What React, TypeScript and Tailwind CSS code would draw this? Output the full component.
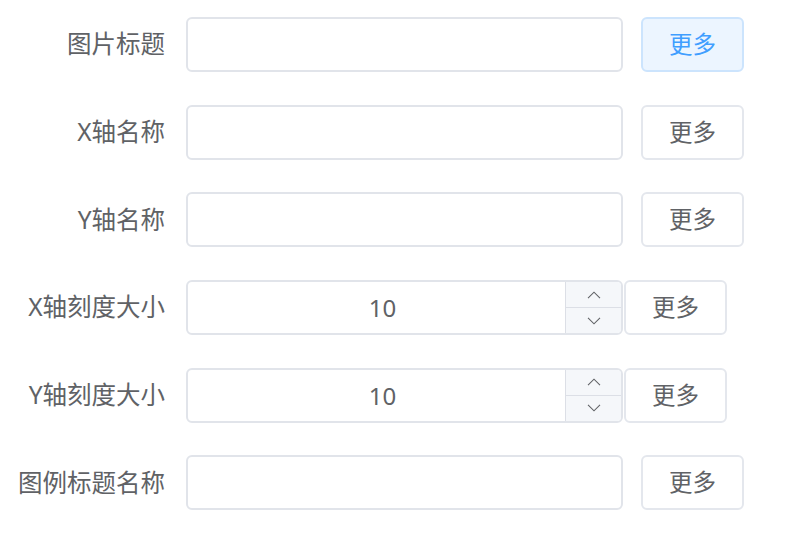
import React from 'react';

type Row = { label: string; kind: 'text' | 'number'; value?: string; active?: boolean };

const rows: Row[] = [
    { label: '图片标题', kind: 'text', active: true },
    { label: 'X轴名称', kind: 'text' },
    { label: 'Y轴名称', kind: 'text' },
    { label: 'X轴刻度大小', kind: 'number', value: '10' },
    { label: 'Y轴刻度大小', kind: 'number', value: '10' },
    { label: '图例标题名称', kind: 'text' },
];

const Chevron: React.FC<{ up?: boolean }> = ({ up }) => (
    <svg width="14" height="8" viewBox="0 0 14 8" fill="none" stroke="#606266" strokeWidth="1.1">
        {up ? <path d="M1 7.2 L7 1.2 L13 7.2" /> : <path d="M1 0.8 L7 6.8 L13 0.8" />}
    </svg>
);

const App: React.FC = () => {
    return (
        <div
            className="w-[796px] h-[541px] bg-white pt-[17px] flex flex-col gap-[32.7px] text-[#606266]"
            style={{ fontFamily: '"Noto Sans", "Noto Sans CJK SC", sans-serif' }}
        >
            {rows.map((row, i) => (
                <div key={i} className="flex items-center h-[55px]">
                    <label className="w-[186px] shrink-0 pr-[21px] text-right text-[24.5px] leading-none whitespace-nowrap">
                        {row.label}
                    </label>

                    {row.kind === 'text' ? (
                        <input
                            type="text"
                            className="w-[437px] h-[55px] rounded-[6px] border-2 border-[#e1e4ea] bg-white px-[20px] text-[22px] outline-none"
                        />
                    ) : (
                        <div className="w-[437px] h-[55px] rounded-[6px] border-2 border-[#e1e4ea] bg-white overflow-hidden flex">
                            <input
                                type="text"
                                defaultValue={row.value}
                                className="flex-1 min-w-0 h-full pl-[12px] text-center text-[24px] text-[#606266] outline-none"
                            />
                            <div className="w-[56px] shrink-0 flex flex-col border-l border-[#dcdfe6] bg-[#f5f7fa]">
                                <div className="flex-1 flex items-center justify-center border-b border-[#dcdfe6]">
                                    <Chevron up />
                                </div>
                                <div className="flex-1 flex items-center justify-center">
                                    <Chevron />
                                </div>
                            </div>
                        </div>
                    )}

                    <button
                        className={
                            row.kind === 'number'
                                ? 'ml-[1px] w-[103px] h-[55px] rounded-[6px] border-2 border-[#e4e7ed] bg-white text-[23.5px] text-[#606266]'
                                : row.active
                                  ? 'ml-[18px] w-[103px] h-[55px] rounded-[6px] border-2 border-[#cce4fd] bg-[#ecf5ff] text-[23.5px] text-[#409eff]'
                                  : 'ml-[18px] w-[103px] h-[55px] rounded-[6px] border-2 border-[#e4e7ed] bg-white text-[23.5px] text-[#606266]'
                        }
                    >
                        更多
                    </button>
                </div>
            ))}
        </div>
    );
};

export default App;
